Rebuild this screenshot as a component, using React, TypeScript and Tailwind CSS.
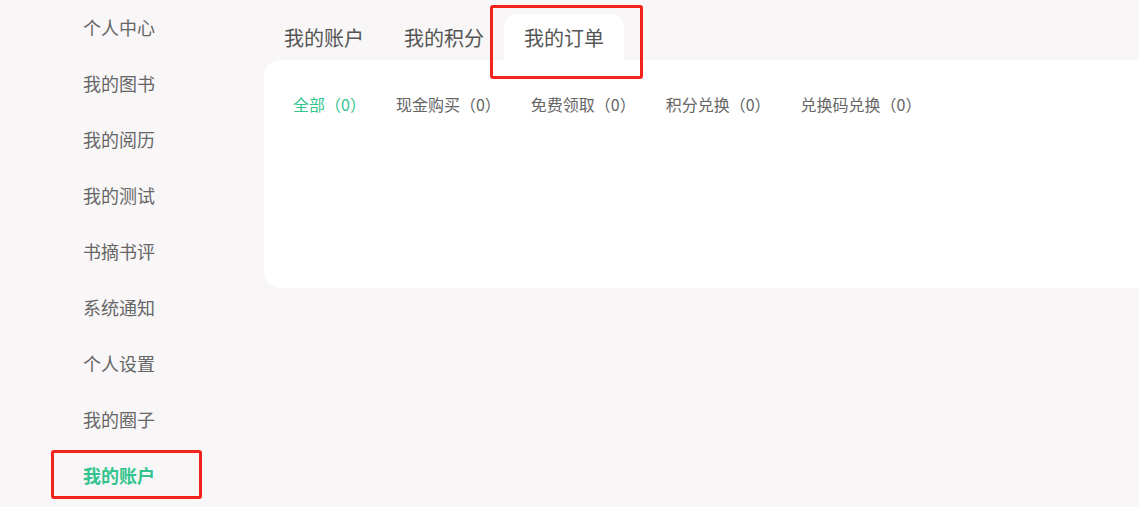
import React from "react";

const menu = [
  "个人中心",
  "我的图书",
  "我的阅历",
  "我的测试",
  "书摘书评",
  "系统通知",
  "个人设置",
  "我的圈子",
  "我的账户",
];

const tabs = ["我的账户", "我的积分", "我的订单"];

const filters = [
  "全部（0）",
  "现金购买（0）",
  "免费领取（0）",
  "积分兑换（0）",
  "兑换码兑换（0）",
];

const App = () => {
  const activeMenu = "我的账户";
  const activeTab = "我的订单";
  const activeFilter = 0;

  return (
    <div
      className="flex h-[507px] w-full overflow-hidden bg-[#f8f6f7]"
      style={{ fontFamily: '"Microsoft YaHei", "Noto Sans CJK SC", sans-serif' }}
    >
      {/* left menu */}
      <div className="w-[264px] shrink-0">
        {menu.map((item) => {
          const active = item === activeMenu;
          return (
            <div key={item} className="relative flex h-[56px] items-center pb-[3px] pl-[83px]">
              <span
                className={
                  active
                    ? "text-[18px] font-bold leading-none text-[#33c38e]"
                    : "text-[18px] leading-none text-[#666666]"
                }
              >
                {item}
              </span>
              {active && (
                <div className="absolute left-[51px] top-[2px] h-[49px] w-[151px] rounded-[3px] border-[3px] border-[#f2231c]" />
              )}
            </div>
          );
        })}
      </div>

      {/* right content */}
      <div className="flex flex-1 flex-col">
        <div className="mt-[14px] flex h-[46px]">
          {tabs.map((tab) => {
            const active = tab === activeTab;
            return (
              <div
                key={tab}
                className={
                  active
                    ? "relative flex h-[46px] items-center rounded-t-[14px] bg-white px-[20px]"
                    : "flex h-[46px] items-center px-[20px]"
                }
              >
                <span className="pt-[1px] text-[20px] leading-none text-[#555555]">{tab}</span>
                {active && (
                  <div className="absolute left-[-14px] top-[-9px] h-[74px] w-[153px] rounded-[3px] border-[3px] border-[#f2231c]" />
                )}
              </div>
            );
          })}
        </div>

        <div className="h-[228px] rounded-l-[16px] bg-white pl-[29px] pt-[33px]">
          <div className="flex gap-[30px]">
            {filters.map((f, i) => (
              <span
                key={f}
                className={
                  i === activeFilter
                    ? "text-[16px] leading-[22px] text-[#33c38e]"
                    : "text-[16px] leading-[22px] text-[#666666]"
                }
              >
                {f}
              </span>
            ))}
          </div>
        </div>
      </div>
    </div>
  );
};

export default App;
